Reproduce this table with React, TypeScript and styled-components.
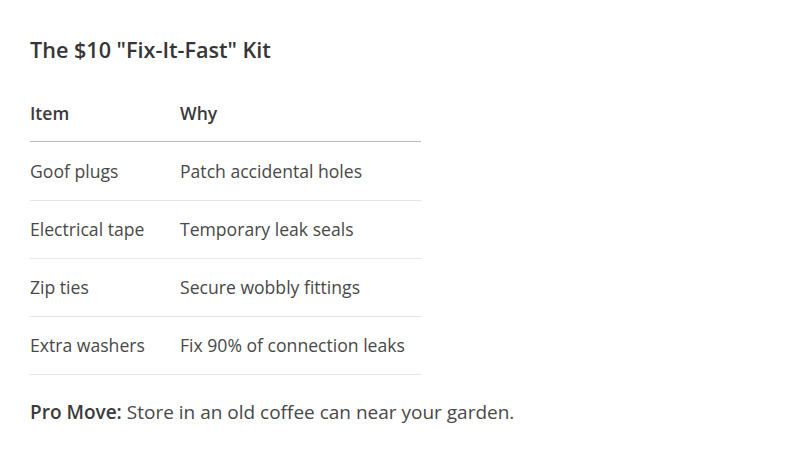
import React from "react";
import styled, { createGlobalStyle } from "styled-components";

const GlobalStyle = createGlobalStyle`
  html, body {
    margin: 0;
    padding: 0;
    background: #ffffff;
  }
  body {
    font-family: "Open Sans", "Noto Sans", Arial, sans-serif;
    color: #444444;
  }
`;

const Page = styled.main`
  padding: 35px 30px 0 30px;
`;

const Title = styled.h2`
  margin: 0 0 20px 0;
  font-size: 21.6px;
  line-height: 30px;
  font-weight: 600;
  color: #363636;
`;

const Table = styled.table`
  width: 391px;
  border-collapse: separate;
  border-spacing: 0;
  font-size: 17.6px;
`;

const HeadCell = styled.th<{ $first?: boolean }>`
  text-align: left;
  font-weight: 600;
  color: #3a3a3a;
  line-height: 24px;
  padding: 16px 0 16px 0;
  border-bottom: 1px solid #bbbbbb;
  width: ${(p) => (p.$first ? "150px" : "auto")};
`;

const Row = styled.tr<{ $first?: boolean }>`
  & > td {
    padding-top: ${(p) => (p.$first ? "17px" : "16px")};
  }
`;

const Cell = styled.td`
  line-height: 24px;
  padding: 16px 0 17px 0;
  border-bottom: 1px solid #e5e5e5;
  color: #484848;
`;

const Note = styled.p`
  margin: 25px 0 0 0;
  font-size: 19px;
  line-height: 24px;
  color: #484848;
`;

const Strong = styled.strong`
  font-weight: 600;
  color: #3a3a3a;
`;

const rows = [
  ["Goof plugs", "Patch accidental holes"],
  ["Electrical tape", "Temporary leak seals"],
  ["Zip ties", "Secure wobbly fittings"],
  ["Extra washers", "Fix 90% of connection leaks"],
];

export default function App() {
  return (
    <>
      <GlobalStyle />
      <Page>
        <Title>The $10 "Fix-It-Fast" Kit</Title>
        <Table>
          <thead>
            <tr>
              <HeadCell $first>Item</HeadCell>
              <HeadCell>Why</HeadCell>
            </tr>
          </thead>
          <tbody>
            {rows.map(([item, why], i) => (
              <Row key={item} $first={i === 0}>
                <Cell>{item}</Cell>
                <Cell>{why}</Cell>
              </Row>
            ))}
          </tbody>
        </Table>
        <Note>
          <Strong>Pro Move:</Strong> Store in an old coffee can near your garden.
        </Note>
      </Page>
    </>
  );
}
